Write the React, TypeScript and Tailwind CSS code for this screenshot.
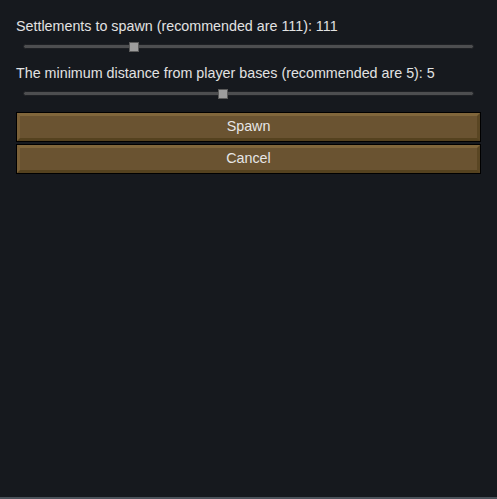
import React from 'react';

function Slider({ pos }: { pos: number }) {
    return (
        <div className="relative mx-[7px] mt-[7px] h-[10px]">
            <div className="absolute left-0 right-0 top-[2px] h-[5px] rounded-full border border-[#1e2024] bg-[#4d4e50]" />
            <div
                className="absolute top-0 h-[10px] w-[10px] border border-[#5a5a5a] bg-[#9d9d9d]"
                style={{ left: pos }}
            />
        </div>
    );
}

function GameButton({ label }: { label: string }) {
    return (
        <div className="border border-black">
            <div className="flex h-[28px] items-center justify-center border-[3px] border-t-[#80663b] border-l-[#7a6038] border-b-[#55421f] border-r-[#5a4623] bg-[#6a5331] text-[14.3px] text-[#e6e6e6]">
                {label}
            </div>
        </div>
    );
}

export default function App() {
    return (
        <div
            className="flex h-[499px] w-[497px] flex-col bg-[#16191e] text-[#e2e2e2]"
            style={{ fontFamily: '"Liberation Sans", Arial, sans-serif' }}
        >
            <div className="flex flex-1 flex-col px-4 pt-[18px]">
                <div className="text-[14.3px] leading-[17px]">Settlements to spawn (recommended are 111): 111</div>
                <Slider pos={106} />
                <div className="mt-[13px] text-[14.3px] leading-[17px]">The minimum distance from player bases (recommended are 5): 5</div>
                <Slider pos={195} />
                <div className="mt-[13px] flex flex-col gap-[2px]">
                    <GameButton label="Spawn" />
                    <GameButton label="Cancel" />
                </div>
            </div>
            <div className="h-[2px] bg-[#4b535b]" />
        </div>
    );
}
